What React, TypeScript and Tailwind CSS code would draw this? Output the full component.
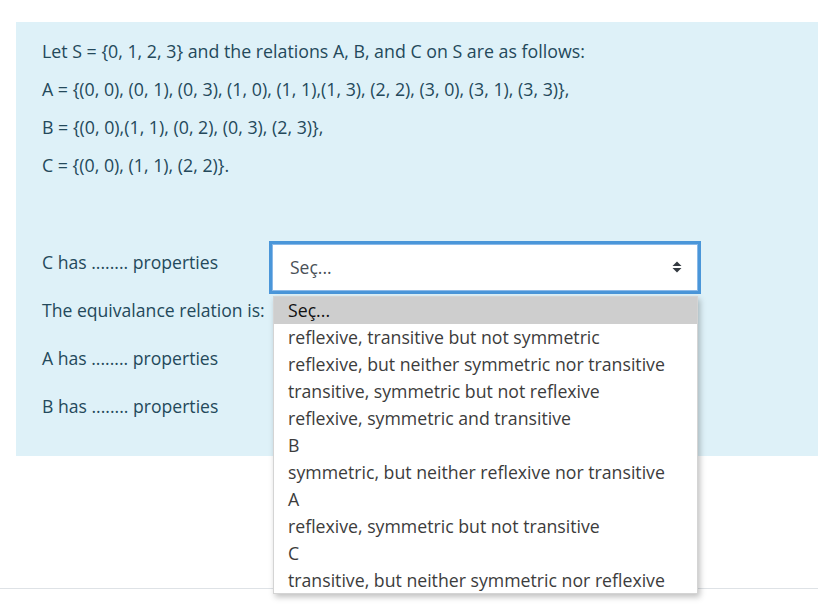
import React from "react";

const options = [
  "Seç...",
  "reflexive, transitive but not symmetric",
  "reflexive, but neither symmetric nor transitive",
  "transitive, symmetric but not reflexive",
  "reflexive, symmetric and transitive",
  "B",
  "symmetric, but neither reflexive nor transitive",
  "A",
  "reflexive, symmetric but not transitive",
  "C",
  "transitive, but neither symmetric nor reflexive",
];

const rows = [
  "C has ........ properties",
  "The equivalance relation is:",
  "A has ........ properties",
  "B has ........ properties",
];

function SortIcon() {
  return (
    <svg width="10" height="12" viewBox="0 0 10 12" className="shrink-0">
      <path d="M5 0.5 L9.5 5 L0.5 5 Z" fill="#343a40" />
      <path d="M5 11.5 L9.5 7 L0.5 7 Z" fill="#343a40" />
    </svg>
  );
}

function OpenSelect() {
  return (
    <div className="relative w-[432px] h-[53px] mt-[4px] shrink-0">
      <div className="h-full border-[3px] border-[#4a96d9] bg-white">
        <div className="h-full border border-[#8ab9e8] flex items-center pl-[17px] pr-[15px]">
          <span className="flex-1 text-[17.5px] text-[#495057]">Seç...</span>
          <SortIcon />
        </div>
      </div>
      <div className="absolute left-[4px] top-[55px] w-[425px] h-[298px] overflow-hidden bg-white border border-[#d4d4d4] shadow-[2px_3px_6px_rgba(0,0,0,0.25)] z-10">
        {options.map((o, i) => (
          <div
            key={i}
            className={
              "h-[27px] leading-[27px] pl-[14px] text-[17.7px] whitespace-nowrap " +
              (i === 0 ? "bg-[#cecece] text-[#111]" : "text-[#3c3c3c]")
            }
          >
            {o}
          </div>
        ))}
      </div>
    </div>
  );
}

export default function App() {
  return (
    <div className="w-[818px] h-[613px] bg-white overflow-hidden font-['Open_Sans',sans-serif] flex flex-col">
      <div className="mt-[22px] ml-[16px] h-[434px] shrink-0 bg-[#def1f8] text-[#24495b] pt-[17px] pl-[26px]">
        <div className="text-[17.8px] leading-[24px]">
          <p className="mb-[14px]">Let S = {"{0, 1, 2, 3}"} and the relations A, B, and C on S are as follows:</p>
          <p className="mb-[14px]">A = {"{(0, 0), (0, 1), (0, 3), (1, 0), (1, 1),(1, 3), (2, 2), (3, 0), (3, 1), (3, 3)}"},</p>
          <p className="mb-[14px]">B = {"{(0, 0),(1, 1), (0, 2), (0, 3), (2, 3)}"},</p>
          <p>C = {"{(0, 0), (1, 1), (2, 2)}"}.</p>
        </div>
        <div className="mt-[64px] flex flex-col">
          {rows.map((r, i) => (
            <div key={i} className="h-[48px] flex items-center">
              <div className="w-[227px] text-[17.6px] pb-[6px] whitespace-nowrap">{r}</div>
              {i === 0 && <OpenSelect />}
            </div>
          ))}
        </div>
      </div>
      <div className="mt-[132px] h-px bg-[#dee2e6] shrink-0" />
    </div>
  );
}
